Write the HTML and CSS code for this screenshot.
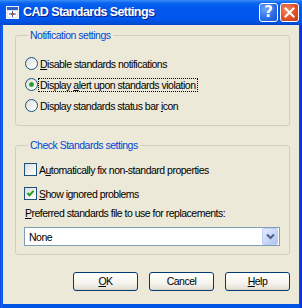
FILE: index.html
```html
<!DOCTYPE html>
<html>
<head>
<meta charset="utf-8">
<link rel="stylesheet" href="styles.css">
</head>
<body>
<div class="window">
  <div class="titlebar">
    <svg class="appicon" width="13" height="13" viewBox="0 0 13 13">
      <rect x="0.5" y="0.5" width="12" height="12" fill="#DCE6F4" stroke="#F4F8FF"/>
      <rect x="1" y="1" width="11" height="3" fill="#2A5FC8"/>
      <rect x="2" y="5" width="9" height="6" fill="#FFFFFF"/>
      <path d="M6.5 5v6M3 8h7" stroke="#3050A0" stroke-width="1"/>
      <rect x="5" y="7" width="3" height="2" fill="#E04020"/>
    </svg>
    <span class="title">CAD Standards Settings</span>
    <div class="tbbuttons">
      <div class="tbbtn help"><span>?</span></div>
      <div class="tbbtn close">
        <svg width="11" height="11" viewBox="0 0 11 11"><path d="M1.5 1.5l8 8M9.5 1.5l-8 8" stroke="#FFFFFF" stroke-width="2" stroke-linecap="square"/></svg>
      </div>
    </div>
  </div>
  <div class="client">
    <fieldset class="group g1">
      <legend>Notification settings</legend>
      <div class="row"><span class="radio"></span><span class="lbl"><u>D</u>isable standards notifications</span></div>
      <div class="row"><span class="radio checked"><i></i></span><span class="lbl focus">Display <u>a</u>lert upon standards violation</span></div>
      <div class="row"><span class="radio"></span><span class="lbl">Display standards status bar <u>i</u>con</span></div>
    </fieldset>
    <fieldset class="group g2">
      <legend>Check Standards settings</legend>
      <div class="row"><span class="check"></span><span class="lbl">A<u>u</u>tomatically fix non-standard properties</span></div>
      <div class="row r2"><span class="check checked">
        <svg width="11" height="11" viewBox="0 0 11 11"><path d="M2.5 5l2 2.2 4-4.4" fill="none" stroke="#21A121" stroke-width="2"/></svg>
      </span><span class="lbl"><u>S</u>how ignored problems</span></div>
      <div class="flabel"><u>P</u>referred standards file to use for replacements:</div>
      <div class="combo">
        <span class="ctext">None</span>
        <span class="cbtn">
          <svg width="9" height="7" viewBox="0 0 9 7"><path d="M1 1.5l3.5 3.5 3.5-3.5" fill="none" stroke="#4D6185" stroke-width="2"/></svg>
        </span>
      </div>
    </fieldset>
    <div class="buttons">
      <div class="btn"><u>O</u>K</div>
      <div class="btn">Cancel</div>
      <div class="btn"><u>H</u>elp</div>
    </div>
  </div>
</div>
</body>
</html>
```
FILE: styles.css
```css
html, body {
  margin: 0;
  padding: 0;
  background: #ECE9D8;
}
.window {
  width: 302px;
  height: 308px;
  background: linear-gradient(90deg, #0831D9 0px, #166AEE 1px, #0055E5 3px, #0055E5 299px, #0831D9 301px);
  display: flex;
  flex-direction: column;
  font-family: "Liberation Sans", Arial, sans-serif;
  font-size: 10.5px;
  letter-spacing: -0.5px;
  color: #000;
}
.titlebar {
  height: 25px;
  flex: none;
  display: flex;
  align-items: flex-start;
  padding-left: 6px;
  background: linear-gradient(180deg, #3C8DF5 0px, #0A65F0 3px, #0058EE 8px, #0057EC 18px, #0052E0 22px, #0046CC 25px);
  box-sizing: border-box;
}
.appicon {
  margin-top: 6px;
  margin-right: 4px;
  flex: none;
}
.title {
  margin-top: 5px;
  color: #FFFFFF;
  font-weight: bold;
  font-size: 12.5px;
  letter-spacing: -0.6px;
  line-height: 15px;
  text-shadow: 1px 1px 0 #0A1E8C;
}
.tbbuttons {
  margin-left: auto;
  display: flex;
  gap: 2px;
  padding-top: 3px;
  padding-right: 3px;
}
.tbbtn {
  width: 19px;
  height: 19px;
  box-sizing: border-box;
  border: 1px solid #FFFFFF;
  border-radius: 3px;
  display: flex;
  align-items: center;
  justify-content: center;
}
.help {
  background: radial-gradient(circle at 30% 30%, #6FA3F6 0%, #2C6FE8 55%, #1A50C8 100%);
}
.help span {
  color: #FFFFFF;
  font-weight: bold;
  font-size: 15px;
  letter-spacing: 0;
  line-height: 15px;
  font-family: "DejaVu Sans", sans-serif;
}
.close {
  background: radial-gradient(circle at 35% 35%, #F08B6C 0%, #E2552D 50%, #C03A1A 100%);
}
.client {
  margin: 0 3px;
  height: 279px;
  background: #ECE9D8;
  padding: 4px 9px 0 12px;
  box-sizing: border-box;
  display: flex;
  flex-direction: column;
}
.group {
  margin: 0;
  border: 1px solid #D0D0BF;
  border-radius: 3px;
  padding: 11px 9px 9px 8px;
  min-width: 0;
}
.group legend {
  padding: 0 2px;
  margin-left: 4px;
  line-height: 13px;
  color: #0046D5;
}
.g2 {
  margin-top: 13px;
  padding-top: 7px;
  padding-bottom: 8px;
}
.row {
  height: 21px;
  display: flex;
  align-items: center;
  gap: 1px;
  white-space: nowrap;
}
.g2 .r2 {
  margin-top: 3px;
}
.lbl {
  line-height: 12px;
  padding: 0 1px;
}
.lbl.focus {
  outline: 1px dotted #000;
  outline-offset: 0;
}
.radio {
  width: 13px;
  height: 13px;
  box-sizing: border-box;
  border: 1px solid #1C5180;
  border-radius: 50%;
  background: linear-gradient(135deg, #DCDCD7 0%, #F0F0EC 50%, #FFFFFF 100%);
  margin-left: 1px;
  display: flex;
  align-items: center;
  justify-content: center;
  flex: none;
}
.radio i {
  width: 5px;
  height: 5px;
  border-radius: 50%;
  background: radial-gradient(circle, #1B8A1B 0%, #4FCB4F 100%);
}
.check {
  width: 13px;
  height: 13px;
  box-sizing: border-box;
  border: 1px solid #1C5180;
  background: linear-gradient(135deg, #DCDCD7 0%, #F0F0EC 50%, #FFFFFF 100%);
  display: flex;
  align-items: center;
  justify-content: center;
  flex: none;
}
.flabel {
  margin-top: 3px;
  line-height: 13px;
  padding-left: 1px;
  white-space: nowrap;
}
.combo {
  margin-top: 7px;
  height: 19px;
  box-sizing: border-box;
  border: 1px solid #7F9DB9;
  background: #FFFFFF;
  display: flex;
  align-items: center;
  padding: 0 1px 0 0;
}
.ctext {
  flex: 1;
  padding-left: 4px;
}
.cbtn {
  width: 16px;
  height: 17px;
  box-sizing: border-box;
  border: 1px solid #BCCDF4;
  border-radius: 2px;
  background: linear-gradient(135deg, #E6EEFE 0%, #C8D6F9 55%, #AFC3F0 100%);
  display: flex;
  align-items: flex-end;
  justify-content: center;
  padding-bottom: 4px;
}
.buttons {
  margin-top: 17px;
  display: flex;
  justify-content: flex-end;
  gap: 11px;
}
.btn {
  width: 65px;
  height: 19px;
  box-sizing: border-box;
  border: 1px solid #003C74;
  border-radius: 3px;
  background: linear-gradient(180deg, #FFFFFF 0%, #F5F4EF 60%, #E6E3D9 90%, #D6D0C5 100%);
  display: flex;
  align-items: center;
  justify-content: center;
  line-height: 13px;
}
```
